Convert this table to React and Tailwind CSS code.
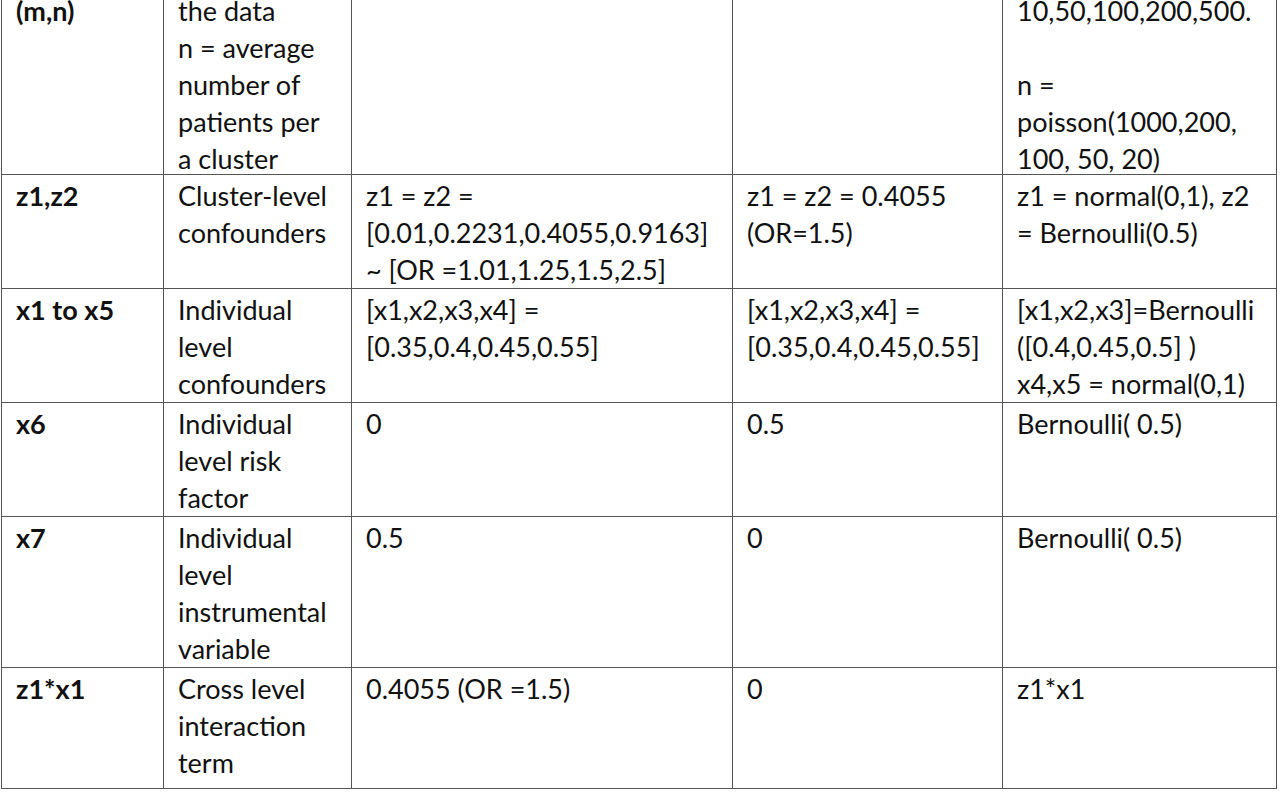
import React from "react";

const rows = [
  {
    first: true,
    cells: [
      ["(m,n)"],
      ["the data", "n = average", "number of", "patients per", "a cluster"],
      [],
      [],
      ["10,50,100,200,500.", "\u00a0", "n =", "poisson(1000,200,", "100, 50, 20)"],
    ],
  },
  {
    cells: [
      ["z1,z2"],
      ["Cluster-level", "confounders"],
      ["z1 = z2 =", "[0.01,0.2231,0.4055,0.9163]", "~ [OR =1.01,1.25,1.5,2.5]"],
      ["z1 = z2 = 0.4055", "(OR=1.5)"],
      ["z1 = normal(0,1), z2", "= Bernoulli(0.5)"],
    ],
  },
  {
    cells: [
      ["x1 to x5"],
      ["Individual", "level", "confounders"],
      ["[x1,x2,x3,x4] =", "[0.35,0.4,0.45,0.55]"],
      ["[x1,x2,x3,x4] =", "[0.35,0.4,0.45,0.55]"],
      ["[x1,x2,x3]=Bernoulli", "([0.4,0.45,0.5] )", "x4,x5 = normal(0,1)"],
    ],
  },
  {
    cells: [
      ["x6"],
      ["Individual", "level risk", "factor"],
      ["0"],
      ["0.5"],
      ["Bernoulli( 0.5)"],
    ],
  },
  {
    cells: [
      ["x7"],
      ["Individual", "level", "instrumental", "variable"],
      ["0.5"],
      ["0"],
      ["Bernoulli( 0.5)"],
    ],
  },
  {
    last: true,
    cells: [
      ["z1*x1"],
      ["Cross level", "interaction", "term"],
      ["0.4055 (OR =1.5)"],
      ["0"],
      ["z1*x1"],
    ],
  },
];

export default function App() {
  return (
    <div className="w-[1280px] h-[807px] overflow-hidden bg-white">
      <table
        className="ml-[1px] -mt-[14px] table-fixed border-collapse text-[27px] leading-[37px] text-[#111] w-[1275px]"
        style={{ fontFamily: "Lato, 'Open Sans', sans-serif" }}
      >
        <colgroup>
          <col className="w-[162px]" />
          <col className="w-[188px]" />
          <col className="w-[381px]" />
          <col className="w-[270px]" />
          <col className="w-[274px]" />
        </colgroup>
        <tbody>
          {rows.map((r, i) => (
            <tr key={i}>
              {r.cells.map((c, j) => (
                <td
                  key={j}
                  className={
                    "border border-[#555] align-top pl-[14px] pr-0 pt-[2px] whitespace-pre " +
                    (r.last ? "pb-[7px] " : "pb-0 ") +
                    (j === 0 ? "font-bold" : "font-normal")
                  }
                >
                  <div className={r.first ? "mt-[3px] -mb-[3px]" : ""}>
                    {c.map((line, k) => (
                      <div key={k}>{line}</div>
                    ))}
                  </div>
                </td>
              ))}
            </tr>
          ))}
        </tbody>
      </table>
    </div>
  );
}
